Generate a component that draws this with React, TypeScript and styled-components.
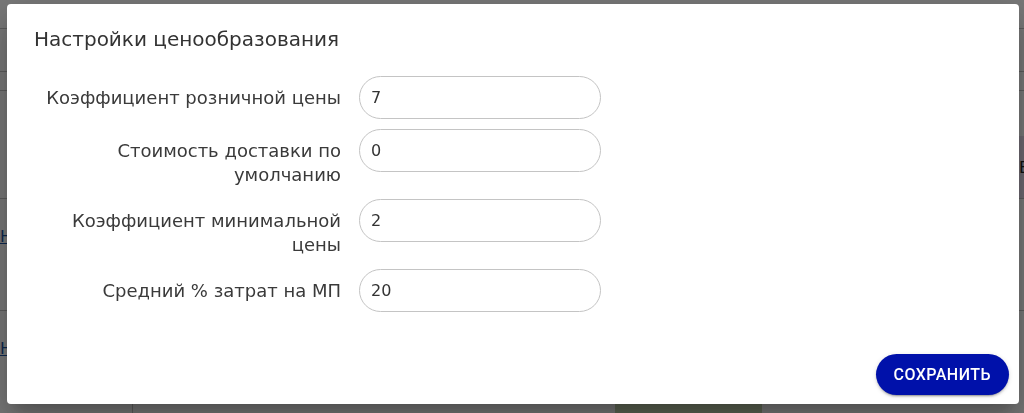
import React from "react";
import styled, { createGlobalStyle } from "styled-components";

const GlobalStyle = createGlobalStyle`
  html, body {
    margin: 0;
    padding: 0;
  }
  body {
    font-family: "DejaVu Sans", Verdana, sans-serif;
    background: #f0f0f0;
    overflow: hidden;
  }
`;

// page behind the dialog (mostly covered)
const Page = styled.div`
  height: 413px;
  overflow: hidden;
  background: #f0f0f0;
`;

const Band = styled.div<{ $h: number }>`
  height: ${(p) => p.$h}px;
  border-bottom: 1px solid #b8b8b8;
`;

const TableRow = styled.div<{ $h: number }>`
  display: grid;
  grid-template-columns: 132px 483px 147px 257px 1fr;
  height: ${(p) => p.$h}px;
  border-bottom: 1px solid #b8b8b8;
`;

const Cell = styled.div<{ $tint?: string; $line?: boolean }>`
  display: flex;
  flex-direction: column;
  justify-content: flex-start;
  overflow: hidden;
  background: ${(p) => p.$tint || "transparent"};
  border-left: ${(p) => (p.$line ? "1px solid #b8b8b8" : "none")};
  font-size: 16px;
  color: #222;
`;

const TintBlock = styled.div`
  margin-top: auto;
  height: 62px;
  background: #dcd2e2;
  display: flex;
  align-items: center;
  font-size: 16px;
  color: #222;
`;

const RowLink = styled.a`
  padding-top: 28px;
  color: #1a4f9c;
  text-decoration: underline;
  font-size: 16px;
`;

const CellText = styled.span`
  padding: 2px 0 0 13px;
`;

// dialog
const Backdrop = styled.div`
  position: fixed;
  inset: 0;
  background: rgba(0, 0, 0, 0.5);
  display: flex;
  padding: 4px 5px 9px 7px;
  box-sizing: border-box;
`;

const Dialog = styled.div`
  flex: 1;
  display: flex;
  flex-direction: column;
  background: #fff;
  border-radius: 4px;
  box-shadow: 0px 11px 15px -7px rgba(0, 0, 0, 0.2),
    0px 24px 38px 3px rgba(0, 0, 0, 0.14), 0px 9px 46px 8px rgba(0, 0, 0, 0.12);
  padding: 20px 10px 9px 27px;
`;

const Title = styled.h2`
  margin: 0;
  font-size: 20px;
  line-height: 30px;
  font-weight: 400;
  color: #333;
`;

const Form = styled.div`
  display: grid;
  grid-template-columns: 307px 242px;
  column-gap: 18px;
  row-gap: 10px;
  margin-top: 22px;
  align-items: start;
`;

const Label = styled.label`
  text-align: right;
  font-size: 18px;
  line-height: 24px;
  padding: 10px 0 2px;
  color: #3a3a3a;
`;

const Input = styled.input`
  width: 100%;
  height: 43px;
  box-sizing: border-box;
  border: 1px solid #c4c4c4;
  border-radius: 22px;
  padding: 0 11px;
  font-family: inherit;
  font-size: 16px;
  color: #333;
  background: #fff;
  outline: none;
`;

const Footer = styled.div`
  margin-top: auto;
  display: flex;
  justify-content: flex-end;
`;

const SaveButton = styled.button`
  border: none;
  border-radius: 999px;
  background: #0011aa;
  color: #fff;
  font-family: Roboto, "Liberation Sans", sans-serif;
  font-weight: 500;
  font-size: 16px;
  line-height: 28px;
  letter-spacing: 0.02857em;
  text-transform: uppercase;
  padding: 6.5px 18px;
  cursor: pointer;
  box-shadow: 0px 3px 1px -2px rgba(0, 0, 0, 0.2),
    0px 2px 2px 0px rgba(0, 0, 0, 0.14), 0px 1px 5px 0px rgba(0, 0, 0, 0.12);
`;

const fields = [
  { id: "retail", label: "Коэффициент розничной цены", value: "7" },
  { id: "delivery", label: "Стоимость доставки по умолчанию", value: "0" },
  { id: "minimal", label: "Коэффициент минимальной цены", value: "2" },
  { id: "mp", label: "Средний % затрат на МП", value: "20" },
];

export default function App() {
  return (
    <>
      <GlobalStyle />
      <Page>
        <Band $h={28} />
        <Band $h={42} />
        <Band $h={18} />
        <TableRow $h={107}>
          <Cell />
          <Cell />
          <Cell />
          <Cell />
          <Cell>
            <TintBlock>Е</TintBlock>
          </Cell>
        </TableRow>
        <TableRow $h={111}>
          <Cell>
            <RowLink href="#">Н</RowLink>
          </Cell>
          <Cell />
          <Cell />
          <Cell />
          <Cell />
        </TableRow>
        <TableRow $h={120}>
          <Cell>
            <RowLink href="#">Н</RowLink>
          </Cell>
          <Cell $line />
          <Cell $tint="#b9c9a6">
            <CellText>0</CellText>
          </Cell>
          <Cell />
          <Cell />
        </TableRow>
      </Page>
      <Backdrop>
        <Dialog role="dialog">
          <Title>Настройки ценообразования</Title>
          <Form>
            {fields.map((f) => (
              <React.Fragment key={f.id}>
                <Label htmlFor={f.id}>{f.label}</Label>
                <Input id={f.id} defaultValue={f.value} />
              </React.Fragment>
            ))}
          </Form>
          <Footer>
            <SaveButton>Сохранить</SaveButton>
          </Footer>
        </Dialog>
      </Backdrop>
    </>
  );
}
